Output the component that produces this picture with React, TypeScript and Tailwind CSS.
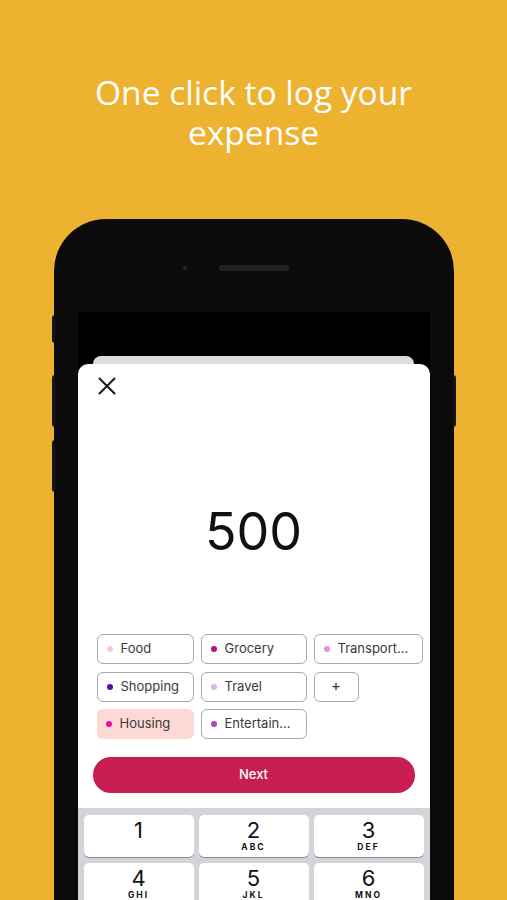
const CHIPS = [
  { label: 'Food', dot: 'bg-[#f7c6df]' },
  { label: 'Grocery', dot: 'bg-[#b3128c]' },
  { label: 'Transport...', dot: 'bg-[#e98fcf]' },
  { label: 'Shopping', dot: 'bg-[#5a0aa6]' },
  { label: 'Travel', dot: 'bg-[#dfb2f2]' },
  { label: '+', dot: '' },
  { label: 'Housing', dot: 'bg-[#e0109c]', active: true },
  { label: 'Entertain...', dot: 'bg-[#a24bb3]' },
];

const KEYS = [
  { n: '1', l: '' },
  { n: '2', l: 'ABC' },
  { n: '3', l: 'DEF' },
  { n: '4', l: 'GHI' },
  { n: '5', l: 'JKL' },
  { n: '6', l: 'MNO' },
];

export default function App() {
  return (
    <div className="h-[900px] w-full overflow-hidden bg-[#edb22f] font-['Inter',sans-serif]">
      {/* Headline */}
      <h1 className="pt-[72px] text-center font-['Open_Sans',sans-serif] text-[33.5px] leading-[40px] text-white">
        <div>One click to log your</div>
        <div>expense</div>
      </h1>

      {/* Phone */}
      <div className="relative mx-auto mt-[67px] h-[800px] w-[400px] rounded-t-[52px] bg-[#0b0b0b]">
        {/* side buttons */}
        <div className="absolute -left-[2px] top-[96px] h-[28px] w-[3px] rounded-l-sm bg-[#151515]" />
        <div className="absolute -left-[2px] top-[156px] h-[52px] w-[3px] rounded-l-sm bg-[#151515]" />
        <div className="absolute -left-[2px] top-[221px] h-[52px] w-[3px] rounded-l-sm bg-[#151515]" />
        <div className="absolute -right-[2px] top-[156px] h-[52px] w-[3px] rounded-r-sm bg-[#151515]" />

        {/* camera + speaker */}
        <div className="flex items-center justify-center gap-[32px] pt-[46px]">
          <div className="h-[4px] w-[4px] rounded-full bg-[#252525]" />
          <div className="h-[6px] w-[70px] rounded-full bg-[#222222]" />
          <div className="w-[4px]" />
        </div>

        {/* Screen */}
        <div className="mx-6 mt-[41px] h-[700px] bg-black pt-[44px]">
          <div className="ml-[15px] mr-[16px] h-[10px] rounded-t-[8px] bg-[#dcdcdc]" />
          <div className="-mt-[2px] h-[650px] rounded-t-[10px] bg-white">
            <div className="pl-[20px] pt-[13px]">
              <svg width="18" height="18" viewBox="0 0 18 18" fill="none" stroke="#1a1a1a" strokeWidth="2" strokeLinecap="round">
                <path d="M1.5 1.5 16.5 16.5M16.5 1.5 1.5 16.5" />
              </svg>
            </div>

            <div className="mt-[111px] text-center text-[52px] leading-[52px] text-[#111]">500</div>

            <div className="mt-[76px] grid grid-cols-[97px_106px_109px] gap-x-[7px] gap-y-[7.5px] pl-[19px]">
              {CHIPS.map((c) =>
                c.label === '+' ? (
                  <div
                    key={c.label}
                    className="flex h-[30px] w-[45px] items-center justify-center rounded-[6px] border border-[#a9a9a9] text-[15px] text-[#333]"
                  >
                    +
                  </div>
                ) : (
                  <div
                    key={c.label}
                    className={`flex h-[30px] items-center gap-[8px] rounded-[6px] pl-[9px] text-[13px] text-[#3a3a3a] ${
                      c.active ? 'bg-[#fdd9d6]' : 'border border-[#a9a9a9]'
                    }`}
                  >
                    <span className={`h-[6px] w-[6px] rounded-full ${c.dot}`} />
                    <span>{c.label}</span>
                  </div>
                )
              )}
            </div>

            <button className="mx-[15px] mt-[18px] flex h-9 w-[322px] items-center justify-center rounded-full bg-[#c81d50] text-[13px] font-medium text-white">
              Next
            </button>

            {/* Keypad */}
            <div className="mt-[15px] h-[200px] bg-[#d2d4d9] px-[6px] pt-[7px]">
              <div className="grid grid-cols-3 gap-x-[5px] gap-y-[6px]">
                {KEYS.map((k) => (
                  <div
                    key={k.n}
                    className="flex h-[42px] flex-col items-center rounded-[5px] bg-white pt-[4px] shadow-[0_1px_0_#898a8d]"
                  >
                    <span className="text-[22px] leading-[22px] text-[#111]">{k.n}</span>
                    {k.l && (
                      <span className="mt-[2px] text-[8.5px] font-bold leading-[9px] tracking-[2px] text-[#111]">
                        {k.l}
                      </span>
                    )}
                  </div>
                ))}
              </div>
            </div>
          </div>
        </div>
      </div>
    </div>
  );
}
